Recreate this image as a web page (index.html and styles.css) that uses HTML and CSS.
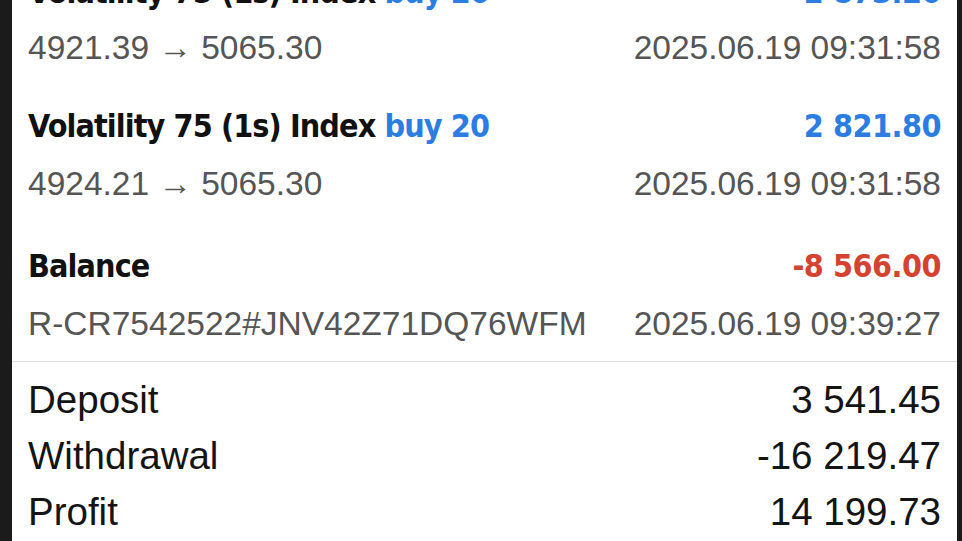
FILE: index.html
```html
<!DOCTYPE html>
<html>
<head>
  <link rel="stylesheet" href="styles.css">
</head>
<body>
  <div class="screen">
    <div class="history">
      <div class="deal">
        <div class="deal-top">
          <span class="symbol">Volatility 75 (1s) Index <span class="side-buy">buy 20</span></span>
          <span class="amount amount-plus">2 873.20</span>
        </div>
        <div class="deal-sub">
          <span>4921.39 → 5065.30</span>
          <span>2025.06.19 09:31:58</span>
        </div>
      </div>
      <div class="deal">
        <div class="deal-top">
          <span class="symbol">Volatility 75 (1s) Index <span class="side-buy">buy 20</span></span>
          <span class="amount amount-plus">2 821.80</span>
        </div>
        <div class="deal-sub">
          <span>4924.21 → 5065.30</span>
          <span>2025.06.19 09:31:58</span>
        </div>
      </div>
      <div class="deal">
        <div class="deal-top">
          <span class="symbol">Balance</span>
          <span class="amount amount-minus">-8 566.00</span>
        </div>
        <div class="deal-sub">
          <span>R-CR7542522#JNV42Z71DQ76WFM</span>
          <span>2025.06.19 09:39:27</span>
        </div>
      </div>
    </div>
    <div class="summary">
      <div class="summary-row"><span>Deposit</span><span>3 541.45</span></div>
      <div class="summary-row"><span>Withdrawal</span><span>-16 219.47</span></div>
      <div class="summary-row"><span>Profit</span><span>14 199.73</span></div>
    </div>
  </div>
</body>
</html>
```

FILE: styles.css
```css
body { margin: 0; background: #1b1b1b; height: 541px; overflow: hidden; }
.screen { margin: 0 5px 0 12px; background: #fff; height: 541px; overflow: hidden; }

/* list is scrolled, first row cut at the top */
.history { margin-top: -28px; }
.deal { padding: 0 16px 42px; }
.deal:first-child { padding-bottom: 38px; }
.deal:first-child .deal-sub { margin-top: 16px; }
.deal:last-child { padding-bottom: 17px; }
.deal-top, .deal-sub { display: flex; justify-content: space-between; align-items: baseline; white-space: nowrap; }
.deal-top { height: 40px; line-height: 40px; font-family: "DejaVu Sans Condensed", "DejaVu Sans", sans-serif; font-stretch: condensed; font-weight: bold; font-size: 32px; letter-spacing: -0.9px; color: #111; }
.side-buy { color: #2b7de1; }
.amount { letter-spacing: -0.5px; }
.amount-plus { color: #2b7de1; }
.amount-minus { color: #d4432f; }
.deal-sub { margin-top: 18px; height: 40px; line-height: 40px; font-family: "Liberation Sans", Arial, sans-serif; font-size: 33.5px; color: #555; }

.summary { border-top: 1px solid #e1e1e1; padding: 10px 16px 0; }
.summary-row { display: flex; justify-content: space-between; line-height: 56px; font-family: "Liberation Sans", Arial, sans-serif; font-size: 38.5px; color: #141414; }
```
